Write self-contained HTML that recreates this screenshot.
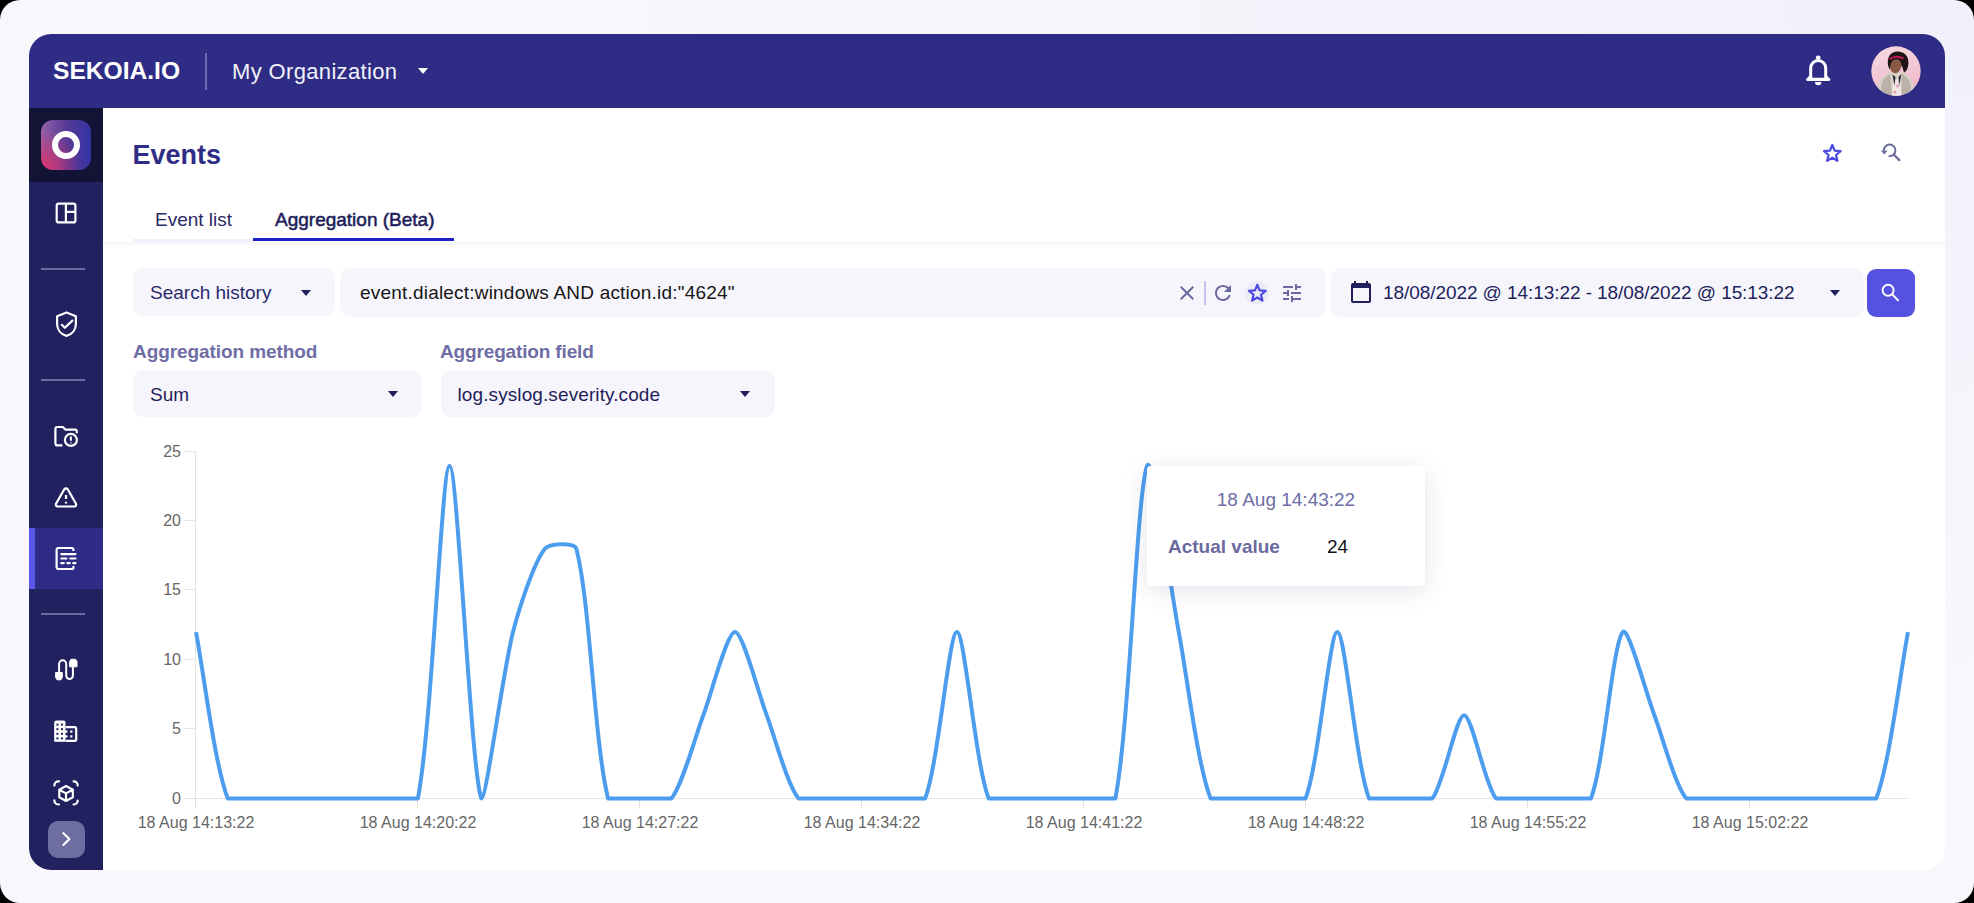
<!DOCTYPE html>
<html><head><meta charset="utf-8">
<style>
*{margin:0;padding:0;box-sizing:border-box}
html,body{width:1974px;height:903px;overflow:hidden;background:#000;font-family:"Liberation Sans",sans-serif}
#outer{position:absolute;left:0;top:0;width:1974px;height:903px;border-radius:20px;background:radial-gradient(ellipse 1400px 700px at 100% 0%,#f1f1fc 0%,rgba(248,248,252,0) 100%),#f8f7fc}
#win{position:absolute;left:29px;top:34px;width:1916px;height:836px;border-radius:22px;overflow:hidden;background:#fff}
#hdr{position:absolute;left:0;top:0;width:1916px;height:74px;background:#2e2c85}
#side{position:absolute;left:0;top:74px;width:74px;height:762px;background:#222160}
.abs{position:absolute;white-space:nowrap}
.sep{position:absolute;left:12px;width:44px;height:2px;background:#6a69a0}
.box{position:absolute;background:#f6f5fb;border-radius:10px}
.tri{position:absolute;width:0;height:0;border-left:5px solid transparent;border-right:5px solid transparent;border-top:6px solid #1f1e5a}
svg.i{position:absolute;overflow:visible}
.yl{position:absolute;width:40px;text-align:right;font-size:16px;color:#666;line-height:18px}
.xl{position:absolute;width:160px;text-align:center;font-size:16px;color:#666;line-height:18px}
</style></head><body>
<div id="outer"></div>
<div id="win">
  <div id="hdr">
    <div class="abs" style="left:24px;top:21.5px;font-size:24.6px;font-weight:bold;color:#fff;line-height:30px">SEKOIA.IO</div>
    <div class="abs" style="left:176px;top:19px;width:2px;height:37px;background:#6d6bb0"></div>
    <div class="abs" style="left:203px;top:24px;font-size:22px;letter-spacing:0.35px;color:#f2f2fa;line-height:28px">My Organization</div>
    <div class="tri" style="left:389px;top:34px;border-top-color:#fff"></div>
    <!-- bell -->
    <svg class="i" style="left:1777px;top:21px" width="25" height="32" viewBox="0 0 25 32">
      <ellipse cx="12.2" cy="2.7" rx="2.4" ry="2.3" fill="#fff"/>
      <path fill="#fff" fill-rule="evenodd" d="M12.2 4A9 9 0 0 1 21.2 13V20.6L23 22.9A1.5 1.5 0 0 1 22.8 25.9H1.6A1.5 1.5 0 0 1 1.4 22.9L3.2 20.6V13A9 9 0 0 1 12.2 4ZM6.2 22.7V13A6 6 0 0 1 18.2 13V22.7Z"/>
      <path d="M9 27.1H15.4A3.2 3.2 0 0 1 9 27.1Z" fill="#fff"/>
    </svg>
    <!-- avatar -->
    <svg class="i" style="left:1842px;top:12px" width="50" height="50" viewBox="0 0 50 50">
      <defs><clipPath id="av"><circle cx="25" cy="25" r="24.7"/></clipPath>
      <linearGradient id="avg" x1="0" y1="0" x2="0.3" y2="1"><stop offset="0" stop-color="#f7dbe3"/><stop offset="1" stop-color="#f0b9cb"/></linearGradient></defs>
      <g clip-path="url(#av)">
        <rect width="50" height="50" fill="url(#avg)"/>
        <path d="M5 52C6 38 10 30 17 27L25 25.5L33 27C40 30 44 38 45 52Z" fill="#d9d0c8"/>
        <path d="M10 40C12 33 15 30 19 28L21 50H12Z M40 40C38 33 35 30 31 28L30 50H38Z" fill="#a89d93" opacity="0.6"/>
        <path d="M21 52L22.5 31L25.5 34L28.5 30.5L31 52Z" fill="#f1e9e7"/>
        <circle cx="26.5" cy="40" r="1.6" fill="#e89aa8"/><circle cx="24" cy="46" r="1.5" fill="#e89aa8"/>
        <path d="M21.5 28.5L23.5 40L24.5 31Z M30.5 28L28 40L27.5 31Z" fill="#2a2a35"/>
        <path d="M16.8 17C16.5 10 20.5 5.8 26 5.6C32.5 5.4 37.3 9.5 37.4 16C37.6 21.5 35.5 25.5 33 26.5L31 20H20L18.8 23.5C17.6 21.5 16.9 19 16.8 17Z" fill="#1d1513"/>
        <ellipse cx="24.8" cy="20.2" rx="5.6" ry="7" fill="#8a5943" transform="rotate(12 24.8 20.2)"/>
        <path d="M18.5 13.2Q25 8.5 32.5 12.5" stroke="#c7185a" stroke-width="2" fill="none"/>
      </g>
    </svg>
  </div>
  <div id="side">
    <div class="abs" style="left:0;top:0;width:74px;height:74px;background:#131335"></div>
    <div class="abs" style="left:12px;top:12px;width:50px;height:50px;border-radius:12px;background:radial-gradient(circle at 0% 100%,rgba(222,48,104,1) 0%,rgba(222,48,104,0.5) 28%,rgba(222,48,104,0) 58%),linear-gradient(to right,#9461a9 0%,#573a96 50%,#3433a2 100%)"></div>
    
    <div class="abs" style="left:23px;top:23px;width:28px;height:28px;border-radius:50%;border:6px solid #fff"></div>
    <div class="sep" style="top:160px"></div>
    <div class="sep" style="top:271px"></div>
    <div class="abs" style="left:0;top:420px;width:74px;height:61px;background:#2e2c85"></div>
    <div class="abs" style="left:0;top:420px;width:6px;height:61px;background:#5a57e8"></div>
    <div class="sep" style="top:505px"></div>
    <div class="abs" style="left:19px;top:713px;width:37px;height:37px;border-radius:10px;background:#6e6da2"></div>
  </div>
  <!-- page title -->
  <div class="abs" style="left:103.5px;top:103.5px;font-size:27px;font-weight:bold;color:#2e2c85;line-height:34px">Events</div>
  <!-- tabs -->
  <div class="abs" style="left:74px;top:208px;width:1842px;height:3px;background:#f7f7fc"></div>
  <div class="abs" style="left:104px;top:205px;width:120px;height:3px;background:#efeff9"></div>
  <div class="abs" style="left:224px;top:204px;width:201px;height:3px;background:#2020c8"></div>
  <div class="abs" style="left:126px;top:175px;font-size:19px;color:#2a2966;line-height:22px">Event list</div>
  <div class="abs" style="left:246px;top:175px;font-size:19px;-webkit-text-stroke:0.55px #1f1e5a;color:#1f1e5a;line-height:22px">Aggregation (Beta)</div>
</div>
<!-- sidebar icons -->
<svg style="position:absolute;left:0;top:0" width="110" height="903" fill="none" stroke="#fff" stroke-width="2.2" stroke-linejoin="round">
  <rect x="56.7" y="203.7" width="18.7" height="18.7" rx="2"/>
  <path d="M65.9 203.7V222.4M65.9 211.8H75.4"/>
  <path d="M66.5 312.4L57.1 316.3V324C57.1 330 61 334.5 66.5 335.9C72 334.5 75.9 330 75.9 324V316.3Z"/>
  <path d="M61.8 324.8L64.8 327.8L72.4 320.6" stroke-linecap="round"/>
  <path d="M62.4 445.4H57.2A1.8 1.8 0 0 1 55.4 443.6V428.8A1.8 1.8 0 0 1 57.2 427H62.8L65.3 429.6H75A1.8 1.8 0 0 1 76.8 431.4V433.2"/>
  <circle cx="70.9" cy="439.9" r="6"/>
  <path d="M70.9 436.4V440.8M70.9 442.6V443.3" stroke-width="2"/>
  <path d="M64.3 489.3A2 2 0 0 1 67.7 489.3L76 503.7A1.9 1.9 0 0 1 74.3 506.5H57.7A1.9 1.9 0 0 1 56 503.7Z"/>
  <path d="M66 494.9V498.9M66 501.8V503.6"/>
  <path d="M73.4 551V549.6A1.6 1.6 0 0 0 71.8 548H58.4A1.8 1.8 0 0 0 56.6 549.8V567.2A1.8 1.8 0 0 0 58.4 569H71.8A1.6 1.6 0 0 0 73.4 567.4V566"/>
  <path d="M61.3 554.1H75.5M61.3 558.5H66.4M70.3 558.5H75.5M61.3 563.1H63.8M67.3 563.1H69.7M73.2 563.1H75.5" stroke-linecap="round"/>
  <path d="M59.1 672V663.85A3.55 3.55 0 0 1 66.2 663.85V675.55A3.35 3.35 0 0 0 72.9 675.55V667" stroke-width="2"/>
  <path d="M55.6 672.5H62.3V677.5L61 679.8H57L55.6 677.5Z M69.6 666.8H77V661.6L75.6 659.3H71L69.6 661.6Z" fill="#fff" stroke-width="1"/>
  <path d="M54.8 741.2V722.6A1.5 1.5 0 0 1 56.3 721.1H63.4A1.5 1.5 0 0 1 64.9 722.6V741.2Z" fill="#fff" stroke-width="1.2"/>
  <path d="M65.6 727.2H75A1.2 1.2 0 0 1 76.2 728.4V739.7A1.2 1.2 0 0 1 75 740.9H65.6"/>
  <g fill="#222160" stroke="none">
    <rect x="56.4" y="723.6" width="2" height="2"/><rect x="61" y="723.6" width="2" height="2"/>
    <rect x="56.4" y="728.2" width="2" height="2"/><rect x="61" y="728.2" width="2" height="2"/>
    <rect x="56.4" y="732.8" width="2" height="2"/><rect x="61" y="732.8" width="2" height="2"/>
    <rect x="56.4" y="737.4" width="2" height="2"/><rect x="61" y="737.4" width="2" height="2"/>
  </g>
  <g fill="#fff" stroke="none">
    <rect x="70.2" y="730.5" width="2.2" height="2.2"/><rect x="70.2" y="735.3" width="2.2" height="2.2"/>
    <rect x="64.5" y="730.5" width="3" height="2.2"/><rect x="64.5" y="735.3" width="3" height="2.2"/>
  </g>
  <path d="M54.4 785.6V785.4A4 4 0 0 1 58.4 781.4H59M73.6 781.4H73.7A4 4 0 0 1 77.7 785.4V785.6M77.7 800.6V800.5A4 4 0 0 1 73.7 804.5H73.6M59 804.5H58.4A4 4 0 0 1 54.4 800.5V800.4" stroke-linecap="round"/>
  <path d="M66 786L72.8 789.8V797.3L66 801L59.3 797.3V789.8Z M59.3 789.8L66 793.4L72.8 789.8 M66 793.4V801"/>
  <path d="M63.4 833.2L69.4 839.1L63.4 845" stroke-width="2.1" stroke-linecap="round"/>
</svg>
<!-- search row -->
<div class="box" style="left:133px;top:268px;width:202px;height:48px"></div>
<div class="abs" style="left:150px;top:282px;font-size:19px;color:#2b2a6e;line-height:22px">Search history</div>
<div class="tri" style="left:301px;top:290px"></div>
<div class="box" style="left:340px;top:268px;width:986px;height:49px"></div>
<div class="abs" style="left:360px;top:282px;font-size:19px;color:#161616;letter-spacing:0.2px;line-height:22px">event.dialect:windows AND action.id:"4624"</div>
<svg class="i" style="left:1175px;top:281px" width="24" height="24" viewBox="0 0 24 24"><path fill="#6b6a9e" d="M19 6.41L17.59 5 12 10.59 6.41 5 5 6.41 10.59 12 5 17.59 6.41 19 12 13.41 17.59 19 19 17.59 13.41 12z"/></svg>
<div class="abs" style="left:1204px;top:281px;width:2px;height:24px;background:#c5c4e8"></div>
<svg class="i" style="left:1211px;top:281px" width="24" height="24" viewBox="0 0 24 24"><path fill="#6b6a9e" d="M17.65 6.35C16.2 4.9 14.21 4 12 4c-4.42 0-7.99 3.58-7.99 8s3.57 8 7.99 8c3.73 0 6.84-2.55 7.73-6h-2.08c-.82 2.33-3.04 4-5.65 4-3.31 0-6-2.69-6-6s2.69-6 6-6c1.66 0 3.14.69 4.22 1.78L13 11h7V4l-2.35 2.35z"/></svg>
<div class="abs" style="left:1245px;top:281px;width:24px;height:24px;border-radius:50%;background:#ececf8"></div>
<svg style="position:absolute;left:0;top:0" width="1974" height="903"><path d="M1257.30 284.80L1259.61 290.36L1265.62 290.85L1261.04 294.77L1262.44 300.63L1257.30 297.49L1252.16 300.63L1253.56 294.77L1248.98 290.85L1254.99 290.36Z" fill="none" stroke="#4b48e0" stroke-width="2.2" stroke-linejoin="round"/></svg>
<svg class="i" style="left:1280px;top:281px" width="24" height="24" viewBox="0 0 24 24"><path fill="#6b6a9e" d="M3 17v2h6v-2H3zM3 5v2h10V5H3zm10 16v-2h8v-2h-8v-2h-2v6h2zM7 9v2H3v2h4v2h2V9H7zm14 4v-2H11v2h10zm-6-4h2V7h4V5h-4V3h-2v6z"/></svg>
<div class="box" style="left:1331px;top:268px;width:533px;height:49px"></div>
<svg class="i" style="left:1348.6px;top:280.3px" width="24" height="24" viewBox="0 0 24 24"><path fill="#211f5c" d="M20 3h-1V1h-2v2H7V1H5v2H4c-1.1 0-2 .9-2 2v16c0 1.1.9 2 2 2h16c1.1 0 2-.9 2-2V5c0-1.1-.9-2-2-2zm0 18H4V8h16v13z"/></svg>
<div class="abs" style="left:1383px;top:282px;font-size:19px;letter-spacing:-0.07px;color:#211f5c;line-height:22px">18/08/2022 @ 14:13:22 - 18/08/2022 @ 15:13:22</div>
<div class="tri" style="left:1830px;top:290px"></div>
<div class="abs" style="left:1867px;top:269px;width:48px;height:48px;border-radius:9px;background:#5552e0"></div>
<svg class="i" style="left:1867px;top:269px" width="48" height="48" viewBox="0 0 48 48"><circle cx="21.1" cy="21.3" r="5.5" fill="none" stroke="#fff" stroke-width="1.9"/><path d="M25.2 25.4L31 31.3" stroke="#fff" stroke-width="2" stroke-linecap="round"/></svg>
<!-- aggregation -->
<div class="abs" style="left:133px;top:340.5px;font-size:19px;font-weight:bold;letter-spacing:-0.08px;color:#6e6da5;line-height:22px">Aggregation method</div>
<div class="abs" style="left:440px;top:340.5px;font-size:19px;font-weight:bold;letter-spacing:-0.15px;color:#6e6da5;line-height:22px">Aggregation field</div>
<div class="box" style="left:133px;top:370px;width:289px;height:47px"></div>
<div class="abs" style="left:150px;top:384px;font-size:19px;color:#1f1e5a;line-height:22px">Sum</div>
<div class="tri" style="left:388px;top:391px"></div>
<div class="box" style="left:441px;top:370px;width:334px;height:47px"></div>
<div class="abs" style="left:457.5px;top:384px;font-size:19px;letter-spacing:0.1px;color:#1f1e5a;line-height:22px">log.syslog.severity.code</div>
<div class="tri" style="left:740px;top:391px"></div>
<!-- chart axes -->
<svg style="position:absolute;left:0;top:0" width="1974" height="903">
  <g stroke="#e3e3e3" stroke-width="1">
    <line x1="195.5" y1="451" x2="195.5" y2="809"/>
    <line x1="185" y1="798.5" x2="1908" y2="798.5"/>
    <line x1="185" y1="451.5" x2="196" y2="451.5"/>
    <line x1="185" y1="520.5" x2="196" y2="520.5"/>
    <line x1="185" y1="589.5" x2="196" y2="589.5"/>
    <line x1="185" y1="659.5" x2="196" y2="659.5"/>
    <line x1="185" y1="728.5" x2="196" y2="728.5"/>
    <line x1="417.5" y1="798" x2="417.5" y2="809"/>
    <line x1="639.5" y1="798" x2="639.5" y2="809"/>
    <line x1="861.5" y1="798" x2="861.5" y2="809"/>
    <line x1="1083.5" y1="798" x2="1083.5" y2="809"/>
    <line x1="1305.5" y1="798" x2="1305.5" y2="809"/>
    <line x1="1527.5" y1="798" x2="1527.5" y2="809"/>
    <line x1="1749.5" y1="798" x2="1749.5" y2="809"/>
  </g>
  <path d="M196.0 632.1C203.9 673.7 214.4 763.4 227.7 798.4C230.2 798.4 251.5 798.4 259.4 798.4C267.3 798.4 283.2 798.4 291.1 798.4C299.0 798.4 314.9 798.4 322.8 798.4C330.7 798.4 346.6 798.4 354.5 798.4C362.4 798.4 378.3 798.4 386.2 798.4C394.1 798.4 416.6 798.4 417.9 798.4C432.4 722.4 441.7 465.8 449.6 465.8C457.6 465.8 470.8 770.8 481.3 798.4C486.7 798.4 502.6 673.0 513.0 632.1C518.5 610.6 533.1 564.2 544.7 548.9C548.9 543.5 574.7 541.9 576.4 548.9C590.5 604.3 594.1 743.0 608.1 798.4C609.9 798.4 631.9 798.4 639.9 798.4C647.8 798.4 667.4 798.4 671.6 798.4C683.2 783.1 695.3 736.0 703.3 715.2C711.2 694.5 727.0 632.1 735.0 632.1C742.9 632.1 758.7 694.5 766.7 715.2C774.6 736.0 786.7 783.1 798.4 798.4C802.5 798.4 822.1 798.4 830.1 798.4C838.0 798.4 853.9 798.4 861.8 798.4C869.7 798.4 885.6 798.4 893.5 798.4C901.4 798.4 922.7 798.4 925.2 798.4C938.5 763.4 949.0 632.1 956.9 632.1C964.8 632.1 975.2 763.4 988.6 798.4C991.1 798.4 1012.4 798.4 1020.3 798.4C1028.2 798.4 1044.1 798.4 1052.0 798.4C1059.9 798.4 1075.8 798.4 1083.7 798.4C1091.6 798.4 1114.0 798.4 1115.4 798.4C1129.9 722.4 1136.6 493.4 1147.1 465.8C1152.4 451.9 1170.9 590.5 1178.8 632.1C1186.7 673.7 1197.2 763.4 1210.5 798.4C1213.0 798.4 1234.3 798.4 1242.2 798.4C1250.1 798.4 1266.0 798.4 1273.9 798.4C1281.9 798.4 1303.1 798.4 1305.6 798.4C1319.0 763.4 1329.4 632.1 1337.3 632.1C1345.3 632.1 1355.7 763.4 1369.0 798.4C1371.5 798.4 1392.8 798.4 1400.7 798.4C1408.7 798.4 1428.3 798.4 1432.4 798.4C1444.1 783.1 1456.2 715.2 1464.1 715.2C1472.1 715.2 1484.2 783.1 1495.9 798.4C1500.0 798.4 1519.6 798.4 1527.6 798.4C1535.5 798.4 1551.3 798.4 1559.3 798.4C1567.2 798.4 1588.5 798.4 1591.0 798.4C1604.3 763.4 1612.3 645.7 1622.7 632.1C1628.1 624.9 1646.4 694.5 1654.4 715.2C1662.3 736.0 1674.4 783.1 1686.1 798.4C1690.2 798.4 1709.9 798.4 1717.8 798.4C1725.7 798.4 1741.6 798.4 1749.5 798.4C1757.4 798.4 1773.3 798.4 1781.2 798.4C1789.1 798.4 1805.0 798.4 1812.9 798.4C1820.8 798.4 1836.7 798.4 1844.6 798.4C1852.5 798.4 1873.8 798.4 1876.3 798.4C1889.6 763.4 1900.1 673.7 1908.0 632.1" fill="none" stroke="#4d9def" stroke-width="4" stroke-linejoin="round"/>
</svg>
<div class="yl" style="left:141px;top:443px">25</div>
<div class="yl" style="left:141px;top:512px">20</div>
<div class="yl" style="left:141px;top:581px">15</div>
<div class="yl" style="left:141px;top:651px">10</div>
<div class="yl" style="left:141px;top:720px">5</div>
<div class="yl" style="left:141px;top:790px">0</div>
<div class="xl" style="left:116px;top:814px">18 Aug 14:13:22</div>
<div class="xl" style="left:338px;top:814px">18 Aug 14:20:22</div>
<div class="xl" style="left:560px;top:814px">18 Aug 14:27:22</div>
<div class="xl" style="left:782px;top:814px">18 Aug 14:34:22</div>
<div class="xl" style="left:1004px;top:814px">18 Aug 14:41:22</div>
<div class="xl" style="left:1226px;top:814px">18 Aug 14:48:22</div>
<div class="xl" style="left:1448px;top:814px">18 Aug 14:55:22</div>
<div class="xl" style="left:1670px;top:814px">18 Aug 15:02:22</div>
<!-- tooltip -->
<div class="abs" style="left:1147px;top:466px;width:278px;height:120px;background:#fff;border-radius:4px;box-shadow:0 4px 24px rgba(60,60,110,0.14)"></div>
<div class="abs" style="left:1147px;top:489px;width:278px;text-align:center;font-size:19px;color:#6e6da5;line-height:22px">18 Aug 14:43:22</div>
<div class="abs" style="left:1168px;top:536px;font-size:19px;font-weight:bold;color:#6b6aa0;line-height:22px">Actual value</div>
<div class="abs" style="left:1327px;top:536px;font-size:19px;color:#111;line-height:22px">24</div>
<!-- page icons -->
<svg style="position:absolute;left:0;top:0" width="1974" height="903"><path d="M1832.30 145.00L1834.61 150.56L1840.62 151.05L1836.04 154.97L1837.44 160.83L1832.30 157.69L1827.16 160.83L1828.56 154.97L1823.98 151.05L1829.99 150.56Z" fill="none" stroke="#4a48e0" stroke-width="2.2" stroke-linejoin="round"/></svg>
<svg style="position:absolute;left:0;top:0" width="1974" height="903"><path d="M1883.80 150.40A5.8 5.8 0 1 1 1888.59 156.11" fill="none" stroke="#6b6a9e" stroke-width="2"/><path d="M1894 154.8L1899.3 160.1" stroke="#6b6a9e" stroke-width="2.2" stroke-linecap="round"/><path d="M1880.9 150.6H1887.7L1884.3 154.6Z" fill="#6b6a9e"/></svg>
</body></html>
